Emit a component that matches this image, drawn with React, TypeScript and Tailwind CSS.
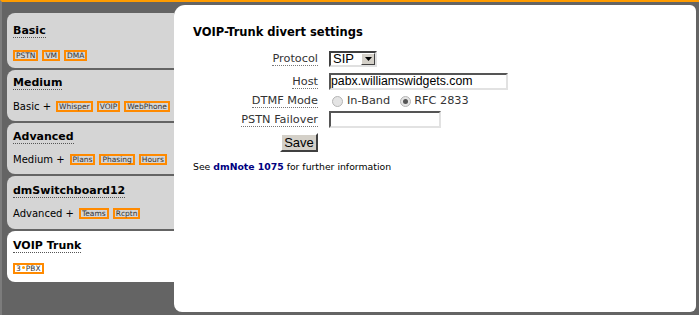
import React from 'react';

const tabs = [
  { title: 'Basic', prefix: '', tags: ['PSTN', 'VM', 'DMA'], box: 'h-[55px] pt-[11px] bg-[#d5d5d5]', row: 'mt-[12px]' },
  { title: 'Medium', prefix: 'Basic +', tags: ['Whisper', 'VOIP', 'WebPhone'], box: 'h-[51px] pt-[6px] bg-[#d5d5d5]', row: 'mt-[11px]' },
  { title: 'Advanced', prefix: 'Medium +', tags: ['Plans', 'Phasing', 'Hours'], box: 'h-[51px] pt-[7px] bg-[#d5d5d5]', row: 'mt-[10px]' },
  { title: 'dmSwitchboard12', prefix: 'Advanced +', tags: ['Teams', 'Rcptn'], box: 'h-[53px] pt-[8px] bg-[#d5d5d5]', row: 'mt-[10px]' },
];

function Tag({ children }: { children: React.ReactNode }) {
  return (
    <span className="inline-flex items-center h-[11px] px-[1px] border-2 border-[#ff8a00] text-[7.5px] leading-[7px] text-[#333] whitespace-nowrap">
      {children}
    </span>
  );
}

function Label({ children }: { children: React.ReactNode }) {
  return (
    <div className="w-[125px] flex justify-end">
      <span className="block leading-[13px] border-b border-dotted border-[#777] text-[#333]">{children}</span>
    </div>
  );
}

function Radio({ checked }: { checked?: boolean }) {
  return (
    <span className="w-[11px] h-[11px] rounded-full border border-[#b5b5b5] bg-[#e4e4e4] flex items-center justify-center">
      {checked && <span className="w-[5px] h-[5px] rounded-full bg-[#555]" />}
    </span>
  );
}

function Title({ children }: { children: React.ReactNode }) {
  return (
    <span className="block w-fit text-[11px] font-bold leading-[13px] text-black border-b border-dotted border-[#555]">
      {children}
    </span>
  );
}

export default function App() {
  return (
    <div className="w-[699px] h-[315px] bg-[#646464] border-t-2 border-[#ff9c00] border-l-2 border-l-[#7c7c7c] flex font-['DejaVu_Sans',Verdana,sans-serif] overflow-hidden">
      {/* Tabs */}
      <div className="ml-[5px] w-[167px] pt-[11px] flex flex-col gap-[2px]">
        {tabs.map((t) => (
          <div key={t.title} className={`${t.box} rounded-l-[8px] px-[6px]`}>
            <Title>{t.title}</Title>
            <div className={`${t.row} flex items-center gap-[4px] h-[11px]`}>
              {t.prefix && <span className="text-[10px] leading-[11px] text-black mr-[1px] whitespace-nowrap">{t.prefix}</span>}
              {t.tags.map((g) => (
                <Tag key={g}>{g}</Tag>
              ))}
            </div>
          </div>
        ))}
        <div className="h-[51px] pt-[8px] bg-white rounded-l-[8px] px-[6px]">
          <Title>VOIP Trunk</Title>
          <div className="mt-[10px] flex items-center h-[11px]">
            <Tag>
              3<span className="inline-block w-[3px] h-[3px] rounded-full bg-[#ff9c00] mb-[3px] mx-[1px]" />PBX
            </Tag>
          </div>
        </div>
      </div>

      {/* Main panel */}
      <div className="flex-1 mt-[3px] mb-[3px] mr-[3px] bg-white rounded-tl-[11px] rounded-tr-[6px] rounded-br-[6px] rounded-bl-[8px] pl-[19px] pt-[20px]">
        <h1 className="text-[11.5px] font-bold leading-[14px] text-black">VOIP-Trunk divert settings</h1>

        <div className="mt-[12px] text-[11.3px]">
          <div className="flex items-center gap-[11px] h-[16px]">
            <Label>Protocol</Label>
            <div className="w-[48px] h-[16px] flex items-center border-2 border-t-[#404040] border-l-[#404040] border-b-[#e0e0e0] border-r-[#e0e0e0] bg-white">
              <span className="flex-1 pl-[2px] font-['Liberation_Sans',Arial,sans-serif] text-[13px] leading-[12px] text-black">SIP</span>
              <span className="w-[14px] h-[12px] bg-[#d4d0c8] border border-t-white border-l-white border-b-[#404040] border-r-[#404040] flex items-center justify-center">
                <svg width="7" height="4" viewBox="0 0 7 4"><path d="M0 0h7L3.5 4z" fill="#000" /></svg>
              </span>
            </div>
          </div>

          <div className="mt-[6px] flex items-center gap-[11px] h-[17px]">
            <Label>Host</Label>
            <div className="w-[179px] h-[17px] flex items-center border-2 border-t-[#555] border-l-[#555] border-b-[#e2e2e2] border-r-[#e2e2e2] font-['Liberation_Sans',Arial,sans-serif] text-[12.3px] text-black">
              pabx.williamswidgets.com
            </div>
          </div>

          <div className="mt-[3px] flex items-center gap-[11px] h-[16px]">
            <Label>DTMF Mode</Label>
            <div className="flex items-center pl-[3px] text-[#333]">
              <Radio />
              <span className="ml-[4px]">In-Band</span>
              <span className="ml-[10px]"><Radio checked /></span>
              <span className="ml-[3px]">RFC 2833</span>
            </div>
          </div>

          <div className="mt-[2px] flex items-center gap-[11px] h-[17px]">
            <Label>PSTN Failover</Label>
            <div className="w-[112px] h-[17px] border-2 border-t-[#555] border-l-[#555] border-b-[#e2e2e2] border-r-[#e2e2e2]" />
          </div>

          <div className="mt-[5px] w-[125px] flex justify-end">
            <button className="w-[38px] h-[19px] bg-[#d4d0c8] border-2 border-t-white border-l-white border-b-[#404040] border-r-[#404040] font-['Liberation_Sans',Arial,sans-serif] text-[13px] leading-[14px] text-black">
              Save
            </button>
          </div>
        </div>

        <p className="mt-[9px] text-[9.3px] leading-[12px] text-black">
          See <b className="text-[#000080]">dmNote 1075</b> for further information
        </p>
      </div>
    </div>
  );
}
